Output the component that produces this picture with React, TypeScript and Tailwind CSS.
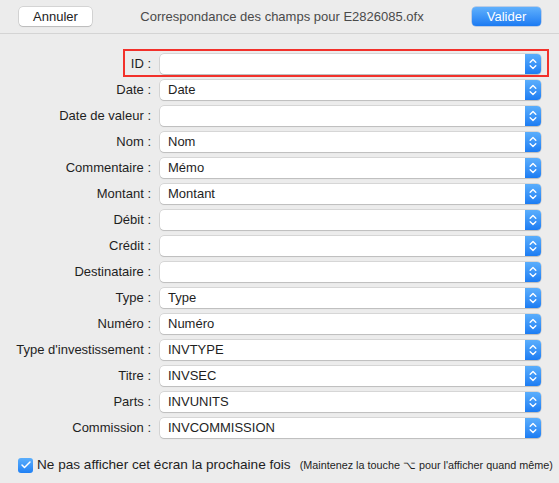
import { Check } from "lucide-react";

const rows: [string, string][] = [
  ["ID", ""],
  ["Date", "Date"],
  ["Date de valeur", ""],
  ["Nom", "Nom"],
  ["Commentaire", "Mémo"],
  ["Montant", "Montant"],
  ["Débit", ""],
  ["Crédit", ""],
  ["Destinataire", ""],
  ["Type", "Type"],
  ["Numéro", "Numéro"],
  ["Type d'investissement", "INVTYPE"],
  ["Titre", "INVSEC"],
  ["Parts", "INVUNITS"],
  ["Commission", "INVCOMMISSION"],
];

function Stepper() {
  return (
    <div className="flex h-[20px] w-[16px] items-center justify-center rounded-r-[4px] bg-gradient-to-b from-[#5aaefc] to-[#1b7cf3]">
      <svg width="8" height="12" viewBox="0 0 8 12" fill="none" stroke="white" strokeWidth="1.4" strokeLinecap="round" strokeLinejoin="round">
        <path d="M1.2 4.2 L4 1.6 L6.8 4.2" />
        <path d="M1.2 7.8 L4 10.4 L6.8 7.8" />
      </svg>
    </div>
  );
}

function Select({ value }: { value: string }) {
  return (
    <div className="flex h-[20px] w-[381px] items-stretch rounded-[4px] bg-white shadow-[0_0_0_0.5px_rgba(0,0,0,0.18),0_1px_1px_rgba(0,0,0,0.12)]">
      <div className="flex flex-1 items-center pl-[8px] text-[13px] text-[#1e1e1e]">{value}</div>
      <Stepper />
    </div>
  );
}

export default function App() {
  return (
    <div className="h-[483px] w-[559px] overflow-hidden bg-[#ececec] font-['Liberation_Sans',Arial,sans-serif] text-[#262626]">
      <div className="flex h-[34px] items-center border-b border-[#d4d4d4] px-[19px]">
        <button className="flex h-[19px] w-[73px] items-center justify-center rounded-[4px] bg-white text-[13px] text-[#222] shadow-[0_0_0_0.5px_rgba(0,0,0,0.2),0_1px_1px_rgba(0,0,0,0.12)]">
          Annuler
        </button>
        <div className="flex-1 text-center text-[13px] text-[#4a4a4a]">Correspondance des champs pour E2826085.ofx</div>
        <button className="mr-[-1px] flex h-[19px] w-[69px] items-center justify-center rounded-[4px] bg-gradient-to-b from-[#5fb0fc] to-[#1a7af2] text-[13px] text-white shadow-[0_0_0_0.5px_rgba(0,80,200,0.4)]">
          Valider
        </button>
      </div>

      <div className="flex flex-col gap-[6px] pt-[20px]">
        {rows.map(([label, value], i) => (
          <div key={label} className="relative flex items-center">
            <div className="w-[152px] pr-[1px] text-right text-[13px] text-[#1e1e1e]">{label} :</div>
            <div className="ml-[8px]">
              <Select value={value} />
            </div>
            {i === 0 && (
              <div className="absolute left-[123px] top-[-5px] h-[28px] w-[426px] border-2 border-[#f2312b]" />
            )}
          </div>
        ))}
      </div>

      <div className="mt-[17px] flex items-center whitespace-nowrap pl-[18px]">
        <div className="flex h-[15px] w-[15px] shrink-0 items-center justify-center rounded-[3px] bg-gradient-to-b from-[#5aaefc] to-[#1f80f4]">
          <Check size={12} strokeWidth={3} color="white" />
        </div>
        <span className="ml-[4px] text-[13.6px] text-[#1e1e1e]">Ne pas afficher cet écran la prochaine fois</span>
        <span className="ml-[9px] text-[10.8px] text-[#1e1e1e]">(Maintenez la touche ⌥ pour l'afficher quand même)</span>
      </div>
    </div>
  );
}
